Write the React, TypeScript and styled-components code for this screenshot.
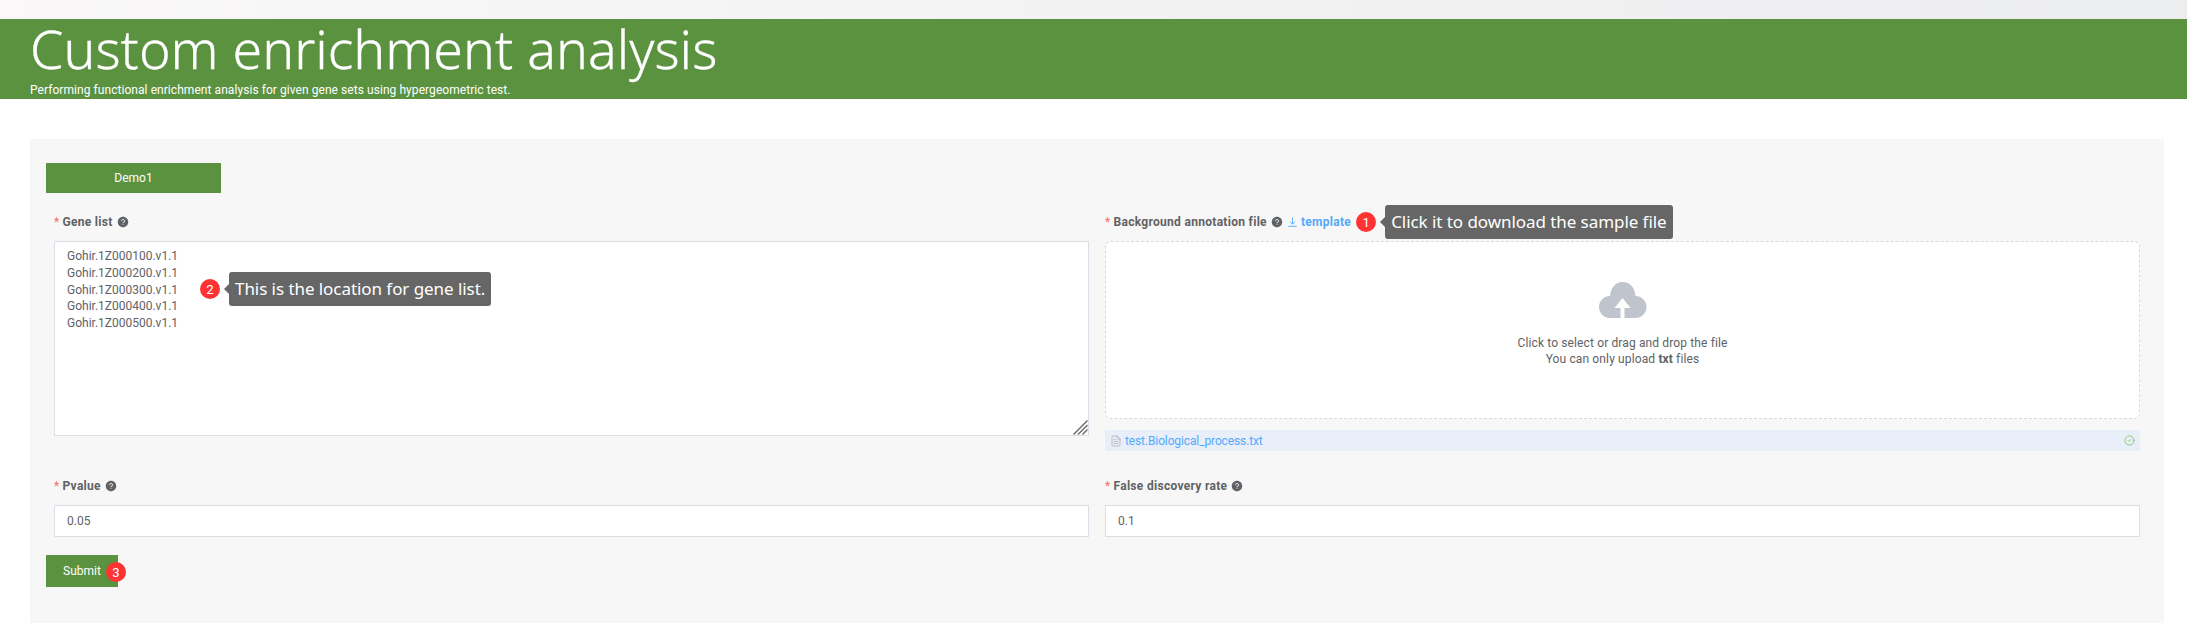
import React from "react";
import styled, { createGlobalStyle } from "styled-components";
import { AiFillQuestionCircle } from "react-icons/ai";
import { FileText, CircleCheck } from "lucide-react";

const Global = createGlobalStyle`
  html, body { margin: 0; padding: 0; height: 623px; overflow: hidden; background: #fff; }
  body { font-family: Roboto, "Noto Sans", "Liberation Sans", sans-serif; font-size: 12px; color: #606266; }
  #root { height: 623px; }
`;

const TopStrip = styled.div`
  height: 19px;
  background: linear-gradient(90deg, #faf8f8, #ecedef);
`;
const Banner = styled.header`
  height: 80px;
  box-sizing: border-box;
  background: #5b9240;
  color: #fff;
  padding-left: 30px;
`;
const Title = styled.h1`
  margin: 0;
  font-family: "Noto Sans", "Open Sans", sans-serif;
  font-weight: 300;
  font-size: 53.7px;
  line-height: 60px;
  height: 62px;
  -webkit-text-stroke: 0.3px #fff;
`;
const Subtitle = styled.p`
  margin: 0;
  font-size: 12px;
  line-height: 18px;
  letter-spacing: 0.06px;
`;
const Panel = styled.main`
  margin: 40px 23px 0 30px;
  padding: 24px 16px 0;
  height: 484px;
  box-sizing: border-box;
  background: #f7f7f7;
`;
const GreenButton = styled.button<{ $w: number; $h: number }>`
  position: relative;
  display: block;
  width: ${(p) => p.$w}px;
  height: ${(p) => p.$h}px;
  padding: 0;
  border: 0;
  background: #5b9240;
  color: #fff;
  font: inherit;
  font-size: 12px;
`;
const FormGrid = styled.div`
  display: grid;
  grid-template-columns: 1035px 1035px;
  column-gap: 16px;
  row-gap: 25px;
  margin: 19px 8px 18px;
`;
const Field = styled.div`
  display: flex;
  flex-direction: column;
  min-width: 0;
`;
const LabelRow = styled.div`
  display: flex;
  align-items: center;
  height: 20px;
  margin-bottom: 9px;
  font-weight: 700;
  letter-spacing: 0.3px;
  white-space: nowrap;
`;
const Star = styled.span`
  color: #f56c6c;
  font-weight: 400;
  margin-right: 3px;
`;
const Help = styled(AiFillQuestionCircle)`
  margin-left: 4px;
  color: #606266;
  font-size: 12px;
`;
const TemplateLink = styled.a`
  display: inline-flex;
  align-items: center;
  gap: 4px;
  margin-left: 5px;
  color: #55a8fb;
`;
const Marker = styled.div`
  display: flex;
  align-items: center;
  gap: 9px;
  height: 34px;
  margin: -7px 0 -7px 5px;
  font-weight: 400;
  letter-spacing: 0;
`;
const OverlayMarker = styled(Marker)`
  position: absolute;
  left: 146px;
  top: 31px;
  margin: 0;
`;
const Badge = styled.span`
  display: flex;
  align-items: center;
  justify-content: center;
  width: 20px;
  height: 20px;
  border-radius: 50%;
  background: #ff3333;
  color: #fff;
  font-size: 13px;
`;
const SubmitBadge = styled(Badge)`
  position: absolute;
  right: -8px;
  top: 7px;
`;
const Tip = styled.div`
  position: relative;
  height: 34px;
  line-height: 34px;
  padding: 0 6px;
  border-radius: 3px;
  background: #666;
  color: #fff;
  font-family: "Noto Sans", sans-serif;
  font-size: 17px;
  letter-spacing: -0.06px;
  white-space: nowrap;
  &::before {
    content: "";
    position: absolute;
    left: -5px;
    top: 12px;
    border-style: solid;
    border-width: 5px 5px 5px 0;
    border-color: transparent #666 transparent transparent;
  }
`;
const AreaWrap = styled.div`
  position: relative;
  height: 195px;
`;
const GeneArea = styled.textarea`
  display: block;
  width: 100%;
  height: 195px;
  box-sizing: border-box;
  padding: 6px 12px;
  border: 1px solid #dcdde6;
  background: #fff;
  color: #606266;
  font: inherit;
  font-size: 12px;
  line-height: 16.8px;
  outline: none;
  resize: none;
`;
const Grip = styled.svg`
  position: absolute;
  right: 1px;
  bottom: 1px;
  width: 15px;
  height: 15px;
  pointer-events: none;
`;
const DropZone = styled.div`
  height: 178px;
  box-sizing: border-box;
  display: flex;
  flex-direction: column;
  align-items: center;
  padding-top: 40px;
  background: #fff;
  border: 1px dashed #d9d9d9;
  border-radius: 6px;
  line-height: 16px;
  letter-spacing: 0.13px;
  text-align: center;
`;
const Cloud = styled.svg`
  width: 48px;
  height: 37px;
  margin-bottom: 16px;
  display: block;
`;
const FileRow = styled.div`
  display: flex;
  align-items: center;
  height: 21px;
  margin-top: 11px;
  padding: 0 5px;
  background: #e8eff9;
  color: #55a8fb;
  letter-spacing: -0.12px;
`;
const FileName = styled.span`
  margin-left: 3px;
  flex: 1;
`;
const TextInput = styled.input`
  display: block;
  width: 100%;
  height: 32px;
  box-sizing: border-box;
  padding: 0 12px;
  border: 1px solid #dcdde6;
  background: #fff;
  color: #606266;
  font: inherit;
  font-size: 12px;
  outline: none;
`;

const DownloadIcon = () => (
  <svg width="9" height="10" viewBox="0 0 9 10" fill="none" stroke="#55a8fb" strokeWidth="0.9">
    <path d="M4.5 0.5V7M1.8 4.5L4.5 7.2L7.2 4.5M0.3 9.3H8.7" />
  </svg>
);

const genes = [
  "Gohir.1Z000100.v1.1",
  "Gohir.1Z000200.v1.1",
  "Gohir.1Z000300.v1.1",
  "Gohir.1Z000400.v1.1",
  "Gohir.1Z000500.v1.1",
].join("\n");

export default function App() {
  return (
    <>
      <Global />
      <TopStrip />
      <Banner>
        <Title>Custom enrichment analysis</Title>
        <Subtitle>Performing functional enrichment analysis for given gene sets using hypergeometric test.</Subtitle>
      </Banner>
      <Panel>
        <GreenButton $w={175} $h={30}>Demo1</GreenButton>
        <FormGrid>
          <Field>
            <LabelRow>
              <Star>*</Star>Gene list<Help />
            </LabelRow>
            <AreaWrap>
              <GeneArea readOnly defaultValue={genes} />
              <Grip viewBox="0 0 15 15" stroke="#707070" strokeWidth="1.5">
                <path d="M14.5 0.5L0.5 14.5M14.5 5L5 14.5M14.5 9.5L9.5 14.5" />
              </Grip>
              <OverlayMarker>
                <Badge>2</Badge>
                <Tip>This is the location for gene list.</Tip>
              </OverlayMarker>
            </AreaWrap>
          </Field>
          <Field>
            <LabelRow>
              <Star>*</Star>Background annotation file<Help />
              <TemplateLink>
                <DownloadIcon />
                template
              </TemplateLink>
              <Marker>
                <Badge>1</Badge>
                <Tip>Click it to download the sample file</Tip>
              </Marker>
            </LabelRow>
            <DropZone>
              <Cloud viewBox="0 0 48 37">
                <path
                  fill="#c0c4cc"
                  d="M21.5 36H11A11 11 0 0 1 11 14C11.5 6 16.5 0 23.7 0C31 0 36 6 36.5 14A11 11 0 0 1 36.5 36H25.5V26H31.5L23.5 16L15.5 26H21.5Z"
                />
              </Cloud>
              <span>Click to select or drag and drop the file</span>
              <span>
                You can only upload <b>txt</b> files
              </span>
            </DropZone>
            <FileRow>
              <FileText size={12} color="#a8abb2" strokeWidth={1.5} />
              <FileName>test.Biological_process.txt</FileName>
              <CircleCheck size={11} color="#67c23a" strokeWidth={1.5} />
            </FileRow>
          </Field>
          <Field>
            <LabelRow>
              <Star>*</Star>Pvalue<Help />
            </LabelRow>
            <TextInput readOnly defaultValue="0.05" />
          </Field>
          <Field>
            <LabelRow>
              <Star>*</Star>False discovery rate<Help />
            </LabelRow>
            <TextInput readOnly defaultValue="0.1" />
          </Field>
        </FormGrid>
        <GreenButton $w={72} $h={32}>
          Submit
          <SubmitBadge>3</SubmitBadge>
        </GreenButton>
      </Panel>
    </>
  );
}
